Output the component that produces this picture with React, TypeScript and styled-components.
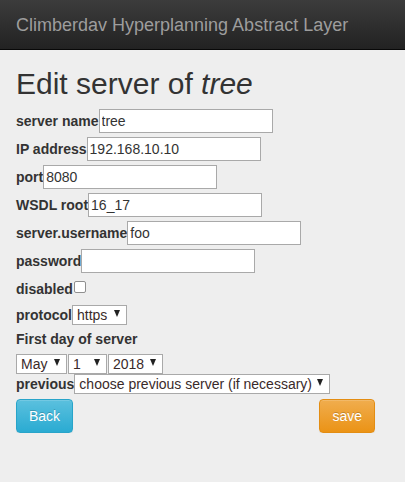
import React from "react";
import styled, { createGlobalStyle } from "styled-components";

const Global = createGlobalStyle`
  html, body { margin: 0; padding: 0; background: #eeeeee; }
  body { font-family: "Liberation Sans", Arial, sans-serif; font-size: 14px; color: #333; }
`;

const Navbar = styled.div`
  height: 49px;
  border-bottom: 1px solid #080808;
  background: linear-gradient(to bottom, #3c3c3c 0%, #222222 100%);
  display: flex;
  align-items: center;
  padding: 0 16px;
`;

const Brand = styled.div`
  font-size: 18px;
  line-height: 20px;
  color: #9d9d9d;
`;

const Main = styled.div`
  padding: 0 16px;
`;

const Title = styled.h1`
  margin: 17px 0 9px;
  font-size: 30px;
  line-height: 33px;
  font-weight: 500;
  color: #333;
  em { font-style: italic; }
`;

const Row = styled.div<{ $h?: number; $mb?: number }>`
  display: flex;
  align-items: center;
  height: ${(p) => p.$h ?? 24}px;
  margin-bottom: ${(p) => p.$mb ?? 4}px;
`;

const Label = styled.label`
  font-weight: bold;
  font-size: 14px;
  color: #333;
`;

const TextInput = styled.input`
  box-sizing: border-box;
  width: 174px;
  height: 24px;
  border: 1px solid #a9a9a9;
  background: #fff;
  padding: 1px 2px;
  font-family: "Liberation Sans", Arial, sans-serif;
  font-size: 14px;
  color: #333;
  outline: none;
`;

const Checkbox = styled.span`
  box-sizing: border-box;
  display: inline-block;
  width: 12px;
  height: 12px;
  margin-left: 1px;
  margin-top: -4px;
  border: 1px solid #8f8f8f;
  border-radius: 2px;
  background: #fff;
`;

const SelectWrap = styled.span<{ $w: number }>`
  position: relative;
  display: inline-block;
  width: ${(p) => p.$w}px;
  height: 20px;
  box-sizing: border-box;
  border: 1px solid #a9a9a9;
  background: #fff;
`;

const Select = styled.select`
  appearance: none;
  -webkit-appearance: none;
  border: none;
  background: transparent;
  width: 100%;
  height: 100%;
  padding: 0 0 0 4px;
  margin: 0;
  font-family: "Liberation Sans", Arial, sans-serif;
  font-size: 14px;
  color: #3a2a2a;
  outline: none;
`;

const Arrow = styled.span`
  position: absolute;
  right: 6px;
  top: 4px;
  width: 0;
  height: 0;
  border-left: 3.5px solid transparent;
  border-right: 3.5px solid transparent;
  border-top: 7px solid #222;
  pointer-events: none;
`;

const Section = styled.div`
  font-weight: bold;
  font-size: 14px;
  line-height: 20px;
  margin: 4px 0 5px;
`;

const DateRow = styled.div`
  display: flex;
  gap: 1px;
  height: 20px;
  margin-bottom: 0;
`;

const Buttons = styled.div`
  display: flex;
  justify-content: space-between;
  width: 359px;
  margin-top: 5px;
`;

const Btn = styled.button<{ $kind: "info" | "warn" }>`
  box-sizing: border-box;
  height: 34px;
  padding: 6px 12px;
  font-family: "Liberation Sans", Arial, sans-serif;
  font-size: 14px;
  line-height: 20px;
  color: #fff;
  border-radius: 4px;
  text-shadow: 0 -1px 0 rgba(0, 0, 0, 0.2);
  box-shadow: inset 0 1px 0 rgba(255, 255, 255, 0.15), 0 1px 1px rgba(0, 0, 0, 0.075);
  border: 1px solid ${(p) => (p.$kind === "info" ? "#28a4c9" : "#e38d13")};
  background: ${(p) =>
    p.$kind === "info"
      ? "linear-gradient(to bottom, #5bc0de 0%, #2aabd2 100%)"
      : "linear-gradient(to bottom, #f0ad4e 0%, #eb9316 100%)"};
`;

function Sel({ w, value }: { w: number; value: string }) {
  return (
    <SelectWrap $w={w}>
      <Select defaultValue={value}>
        <option>{value}</option>
      </Select>
      <Arrow />
    </SelectWrap>
  );
}

export default function App() {
  return (
    <>
      <Global />
      <Navbar>
        <Brand>Climberdav Hyperplanning Abstract Layer</Brand>
      </Navbar>
      <Main>
        <Title>
          Edit server of <em>tree</em>
        </Title>
        <Row>
          <Label>server name</Label>
          <TextInput defaultValue="tree" />
        </Row>
        <Row>
          <Label>IP address</Label>
          <TextInput defaultValue="192.168.10.10" />
        </Row>
        <Row>
          <Label>port</Label>
          <TextInput defaultValue="8080" />
        </Row>
        <Row>
          <Label>WSDL root</Label>
          <TextInput defaultValue="16_17" />
        </Row>
        <Row>
          <Label>server.username</Label>
          <TextInput defaultValue="foo" />
        </Row>
        <Row>
          <Label>password</Label>
          <TextInput type="password" defaultValue="" />
        </Row>
        <Row $h={24} $mb={4}>
          <Label>disabled</Label>
          <Checkbox />
        </Row>
        <Row $h={20} $mb={0}>
          <Label>protocol</Label>
          <Sel w={55} value="https" />
        </Row>
        <Section>First day of server</Section>
        <DateRow>
          <Sel w={51} value="May" />
          <Sel w={39} value="1" />
          <Sel w={55} value="2018" />
        </DateRow>
        <Row $h={20} $mb={0}>
          <Label>previous</Label>
          <Sel w={256} value="choose previous server (if necessary)" />
        </Row>
        <Buttons>
          <Btn $kind="info">Back</Btn>
          <Btn $kind="warn">save</Btn>
        </Buttons>
      </Main>
    </>
  );
}
